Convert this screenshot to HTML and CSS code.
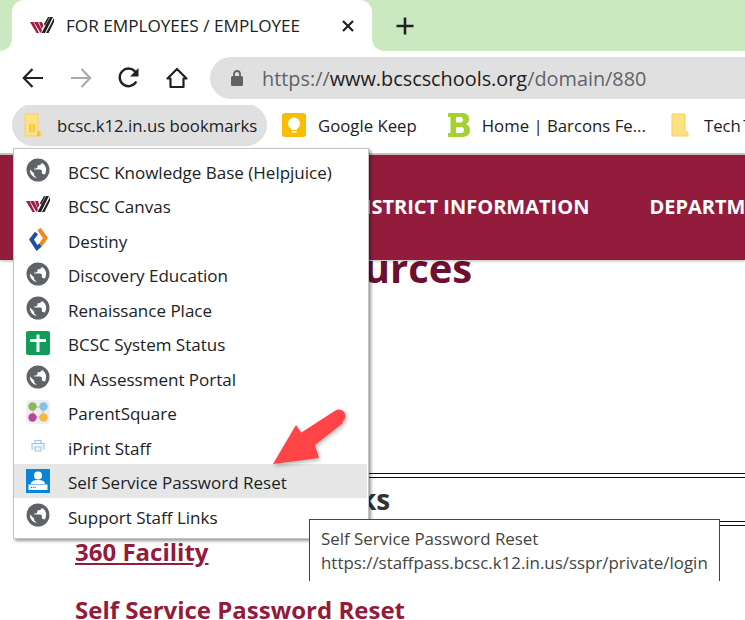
FILE: index.html
```html
<!DOCTYPE html>
<html lang="en">
<head>
<meta charset="utf-8">
<title>FOR EMPLOYEES / EMPLOYEE</title>
<link rel="stylesheet" href="styles.css">
</head>
<body>
<svg class="defs" width="0" height="0" aria-hidden="true">
  <symbol id="globe" viewBox="1 1 22 22">
    <path fill="#5f6368" stroke="#5f6368" stroke-width="1.100" d="M12 2C6.480 2 2 6.480 2 12s4.480 10 10 10 10-4.480 10-10S17.520 2 12 2zm-1 17.930c-3.950-.490-7-3.850-7-7.930 0-.620.080-1.210.210-1.790L9 15v1c0 1.100.900 2 2 2v1.930zm6.900-2.540c-.260-.810-1-1.390-1.900-1.390h-1v-3c0-.550-.450-1-1-1H8v-2h2c.550 0 1-.450 1-1V7h2c1.100 0 2-.900 2-2v-.410c2.930 1.190 5 4.060 5 7.410 0 2.080-.800 3.970-2.100 5.390z"/>
  </symbol>
  <symbol id="canvas" viewBox="0 0 24 20">
    <path d="M0 6H3.500L9 17H6.500Z M4 6H8L12 14.500L10.500 17Z" fill="#a11d3f"/>
    <path d="M9 6H12L13.500 10L11.500 13Z" fill="#a11d3f"/>
    <path d="M11.500 17L20 1H23L15 17Z M16 17L24 2V6L18.500 17Z" fill="#222"/>
    <path d="M14 8L18 1H19.500L15 10Z" fill="#222"/>
  </symbol>
</svg>

<header class="chrome">
  <div class="tabstrip">
    <div class="tab">
      <svg class="tab-icon" width="24" height="20"><use href="#canvas"/></svg>
      <span class="tab-title">FOR EMPLOYEES / EMPLOYEE</span>
      <svg class="tab-close" width="14" height="14" viewBox="0 0 14 14"><path d="M2 2L12 12M12 2L2 12" stroke="#202124" stroke-width="2.200"/></svg>
    </div>
    <svg class="new-tab" width="20" height="20" viewBox="0 0 20 20"><path d="M10 1.500V18.500M1.500 10H18.500" stroke="#202124" stroke-width="2.600"/></svg>
  </div>

  <div class="toolbar">
    <svg class="tool" width="24" height="24" viewBox="0 0 24 24"><path d="M22 12H3M11.500 3L2.800 12L11.500 21" fill="none" stroke="#202124" stroke-width="2.200"/></svg>
    <svg class="tool" width="24" height="24" viewBox="0 0 24 24"><path d="M2 12H21M12.500 3L21.200 12L12.500 21" fill="none" stroke="#aaabad" stroke-width="2.200"/></svg>
    <svg class="tool" width="24" height="24" viewBox="0 0 24 24"><path d="M19.300 15.500A8.800 8.800 0 1 1 18.500 6" fill="none" stroke="#202124" stroke-width="2.400"/><path d="M21.500 2V10.500H13Z" fill="#202124"/></svg>
    <svg class="tool" width="24" height="24" viewBox="0 0 24 24"><path d="M2.500 12.500L12 3L21.500 12.500H18.500V21H5.500V12.500Z" fill="none" stroke="#202124" stroke-width="2.200" stroke-linejoin="round"/></svg>
    <div class="omnibox">
      <svg class="lock" width="14" height="18" viewBox="0 0 14 18"><path d="M4 7V5a3 3 0 0 1 6 0V7" fill="none" stroke="#5f6368" stroke-width="1.800"/><rect x="1" y="7" width="12" height="10" rx="1.500" fill="#5f6368"/></svg>
      <span class="url"><span class="url-dim">https://</span>www.bcscschools.org<span class="url-dim">/domain/880</span></span>
    </div>
  </div>

  <nav class="bookmarks">
    <div class="bm bm-open">
      <svg width="18" height="24" viewBox="0 0 18 24"><path d="M1 1H14V19H17V23H1Z" fill="#ffe082" stroke="#f5d25f"/><path d="M5 11H11V19H5Z M13 18H16V23H13Z" fill="#f0c64a"/><path d="M6 12.500H10M6 15H10M6 17.500H10" stroke="#ffe082" stroke-width="1"/></svg>
      <span>bcsc.k12.in.us bookmarks</span>
    </div>
    <div class="bm bm-keep">
      <svg width="24" height="24" viewBox="0 0 24 24"><rect width="24" height="24" rx="3" fill="#fbbc04"/><circle cx="12" cy="10.500" r="6" fill="#fff"/><rect x="9" y="15" width="6" height="2" fill="#fff"/><rect x="9.500" y="18" width="5" height="1.600" fill="#fff"/></svg>
      <span>Google Keep</span>
    </div>
    <div class="bm bm-home">
      <svg width="22" height="24" viewBox="0 0 22 24"><path fill-rule="evenodd" d="M0 0H14C19 0 21 2.500 21 6C21 8.500 20 10 18 11C20.500 12 22 14 22 17C22 21.500 19 24 14 24H0V20H2.500V4H0Z M8 4V9.500H12.500C14 9.500 15 8.500 15 6.800C15 5 14 4 12.500 4Z M8 14V20H13C15 20 16 19 16 17C16 15 15 14 13 14Z" fill="#a4d233"/></svg>
      <span>Home | Barcons Fe...</span>
    </div>
    <div class="bm bm-tech">
      <svg width="18" height="24" viewBox="0 0 18 24"><path d="M1 1H14V19H17V23H1Z" fill="#ffe082" stroke="#f5d25f"/></svg>
      <span>Tech Tools</span>
    </div>
  </nav>
</header>

<main class="page">
  <div class="site-nav">
    <span>DISTRICT INFORMATION</span>
    <span>DEPARTMENTS</span>
  </div>
  <h1 class="page-title">Resources</h1>
  <div class="rule rule-top"></div>
  <h2 class="section-title">Support Staff Links</h2>
  <div class="rule"></div>
  <a class="link link-first" href="#">360 Facility</a>
  <p class="link-plain">Self Service Password Reset</p>

  <ul class="menu">
    <li class="menu-item"><svg width="24" height="24"><use href="#globe"/></svg><span>BCSC Knowledge Base (Helpjuice)</span></li>
    <li class="menu-item"><svg width="24" height="20"><use href="#canvas"/></svg><span>BCSC Canvas</span></li>
    <li class="menu-item">
      <svg width="24" height="24" viewBox="0 0 24 24"><path d="M13 2L19.500 11L14.500 18" fill="none" stroke="#f08a1d" stroke-width="4"/><path d="M10.500 6L5.500 12.500L11 21L14.500 18" fill="none" stroke="#1c4fa0" stroke-width="4"/></svg>
      <span>Destiny</span>
    </li>
    <li class="menu-item"><svg width="24" height="24"><use href="#globe"/></svg><span>Discovery Education</span></li>
    <li class="menu-item"><svg width="24" height="24"><use href="#globe"/></svg><span>Renaissance Place</span></li>
    <li class="menu-item">
      <svg width="24" height="24" viewBox="0 0 24 24"><rect width="24" height="24" rx="2" fill="#0f9d58"/><path d="M12 3.500V21M4 9.500H20" stroke="#fff" stroke-width="3"/></svg>
      <span>BCSC System Status</span>
    </li>
    <li class="menu-item"><svg width="24" height="24"><use href="#globe"/></svg><span>IN Assessment Portal</span></li>
    <li class="menu-item">
      <svg width="24" height="24" viewBox="0 0 24 24"><rect width="24" height="24" rx="4" fill="#eeeeee"/><path d="M7 7H17V17H7Z" fill="none" stroke="#c9c9c9" stroke-width="1.500"/><circle cx="6.500" cy="6.500" r="4.200" fill="#8cb755"/><circle cx="17.500" cy="6.500" r="4.200" fill="#85c1e9"/><circle cx="6.500" cy="17.500" r="4.200" fill="#b8479a"/><circle cx="17.500" cy="17.500" r="4.200" fill="#f5b941"/></svg>
      <span>ParentSquare</span>
    </li>
    <li class="menu-item">
      <svg width="24" height="24" viewBox="0 0 24 24"><path d="M9 9V6.500H15V9M7 15H6V9.500H18V15H17M9 13H15V17H9Z" fill="#eef6fc" stroke="#9cc8e6" stroke-width="1.100"/></svg>
      <span>iPrint Staff</span>
    </li>
    <li class="menu-item menu-item-active">
      <svg width="24" height="24" viewBox="0 0 24 24"><rect width="24" height="24" fill="#0a84d6"/><circle cx="12" cy="6.500" r="4" fill="#fff"/><path d="M5 15C5 12 8 11 12 11C16 11 19 12 19 15Z" fill="#fff"/><rect x="2.500" y="15.500" width="19" height="5.500" fill="#fff"/><path d="M5 18.300H10" stroke="#0a84d6" stroke-width="1.200" stroke-dasharray="1.200 1"/></svg>
      <span>Self Service Password Reset</span>
    </li>
    <li class="menu-item"><svg width="24" height="24"><use href="#globe"/></svg><span>Support Staff Links</span></li>
  </ul>

  <svg class="arrow" width="90" height="70" viewBox="0 0 90 70">
    <path d="M4 56L27 17L35 29L68 7L74 15L46 37L50 50Z" fill="#ff4448"/>
    <path d="M36 30L70 8" stroke="#ff4448" stroke-width="13" stroke-linecap="round"/>
  </svg>

  <div class="tooltip">
    <div>Self Service Password Reset</div>
    <div>https://staffpass.bcsc.k12.in.us/sspr/private/login</div>
  </div>
</main>
</body>
</html>
```
FILE: styles.css
```css
* { box-sizing: border-box; }
html, body { margin: 0; padding: 0; }
body {
  width: 745px;
  height: 620px;
  overflow: hidden;
  background: #fff;
  font-family: "Open Sans", "Noto Sans", sans-serif;
  color: #202124;
}
.defs { position: absolute; }

.tabstrip {
  height: 51px;
  background: #cbe9c0;
  display: flex;
  align-items: center;
  padding-left: 12px;
}
.tab {
  position: relative;
  width: 360px;
  height: 51px;
  background: #fff;
  border-radius: 12px 12px 0 0;
  display: flex;
  align-items: center;
  padding: 0 17px 0 18px;
}
.tab::before,
.tab::after {
  content: "";
  position: absolute;
  bottom: 0;
  width: 12px;
  height: 12px;
}
.tab::before {
  left: -12px;
  background: radial-gradient(circle at 0 0, #cbe9c0 11.500px, #fff 12.200px);
}
.tab::after {
  right: -12px;
  background: radial-gradient(circle at 100% 0, #cbe9c0 11.500px, #fff 12.200px);
}
.tab-icon { flex: none; margin-right: 12px; }
.tab-title { flex: 1; font-size: 17.150px; white-space: nowrap; }
.tab-close { flex: none; }
.new-tab { margin-left: 23px; }

.toolbar {
  height: 54px;
  display: flex;
  align-items: center;
  padding-left: 21px;
  gap: 24px;
}
.tool { flex: none; }
.omnibox {
  margin-left: -3px;
  width: 560px;
  height: 42px;
  background: #e0e0e0;
  border-radius: 21px 0 0 21px;
  display: flex;
  align-items: center;
  padding-left: 20px;
  margin-right: -40px;
}
.lock { margin-right: 18px; flex: none; }
.url { font-size: 19.850px; white-space: nowrap; }
.url-dim { color: #5f6368; }

.bookmarks {
  height: 50px;
  padding: 0 0 8px 12px;
  display: flex;
  align-items: center;
  border-bottom: 2px solid #c8c8c8;
  white-space: nowrap;
  overflow: hidden;
  font-size: 16.750px;
}
.bm { display: flex; align-items: center; flex: none; }
.bm-open {
  width: 255px;
  height: 42px;
  background: #e0e0e0;
  border-radius: 21px;
  padding-left: 12px;
  gap: 15px;
}
.bm-keep { margin-left: 15px; gap: 12px; }
.bm-home { margin-left: 31px; gap: 12px; }
.bm-tech { margin-left: 25px; gap: 15px; word-spacing: -2px; }

.page { position: relative; }
.site-nav {
  position: relative;
  z-index: 1;
  height: 105px;
  background: #931b3b;
  box-shadow: 0 1px 3px rgba(0, 0, 0, .3);
  color: #fff;
  font-weight: 700;
  font-size: 20px;
  display: flex;
  align-items: center;
  gap: 60px;
  padding: 0 0 2px 350px;
  white-space: nowrap;
}
.page-title {
  margin: -17px 0 0;
  padding-left: 269px;
  font-size: 40px;
  line-height: 50px;
  font-weight: 700;
  color: #6d0f30;
}
.rule {
  height: 5px;
  border-top: 1px solid #111;
  border-bottom: 1px solid #111;
  margin-left: 75px;
}
.rule-top { margin-top: 180px; }
.section-title {
  margin: 0;
  padding-left: 124px;
  font-size: 28px;
  line-height: 43px;
  font-weight: 700;
  color: #333;
}
.link, .link-plain {
  display: block;
  margin: 0 0 0 75px;
  font-size: 24px;
  font-weight: 700;
  color: #931b3b;
  line-height: 32px;
}
.link-first { margin-top: 10px; }
.link-plain { margin-top: 26px; }

.menu {
  position: absolute;
  z-index: 2;
  left: 13px;
  top: -7px;
  width: 356px;
  height: 391px;
  margin: 0;
  padding: 4px 1px 5px 0;
  list-style: none;
  background: #fff;
  border: 1px solid #c4c4c4;
  box-shadow: 2px 2px 3px rgba(0, 0, 0, .4);
  font-size: 17px;
}
.menu-item {
  height: 34.500px;
  display: flex;
  align-items: center;
  gap: 18px;
  padding-left: 12px;
  white-space: nowrap;
}
.menu-item span { padding-top: 4px; }
.menu-item svg { flex: none; }
.menu-item-active { background: #e6e6e6; }

.arrow {
  position: absolute;
  z-index: 3;
  left: 269px;
  top: 253px;
  filter: drop-shadow(1px 2px 2px rgba(0, 0, 0, .3));
}
.tooltip {
  position: absolute;
  z-index: 4;
  left: 309px;
  top: 364px;
  width: 411px;
  height: 62px;
  background: #fff;
  border: 1px solid #444;
  border-bottom: 0;
  padding: 7px 11px 0;
  font-size: 16.900px;
  line-height: 24px;
  color: #444;
  white-space: nowrap;
}
```
